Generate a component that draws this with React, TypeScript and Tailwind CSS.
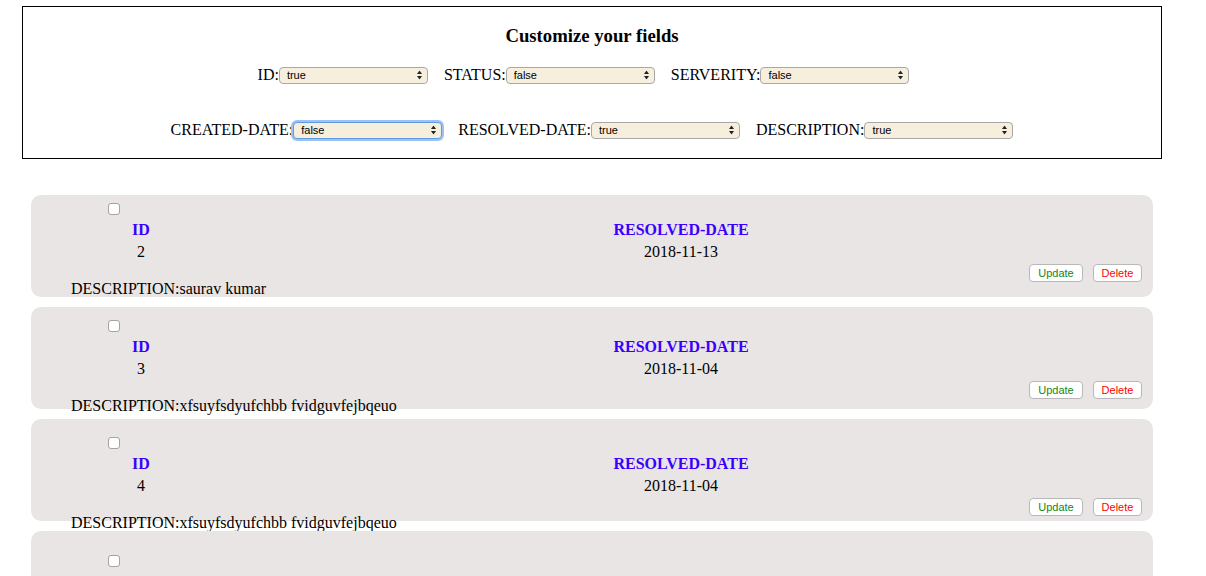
import React, { useState } from 'react';

interface Issue {
  id: number;
  resolvedDate: string;
  description: string;
  pad: string;
}

const issues: Issue[] = [
  { id: 2, resolvedDate: '2018-11-13', description: 'saurav kumar', pad: 'pt-[8px]' },
  { id: 3, resolvedDate: '2018-11-04', description: 'xfsuyfsdyufchbb fvidguvfejbqeuo', pad: 'pt-[13px]' },
  { id: 4, resolvedDate: '2018-11-04', description: 'xfsuyfsdyufchbb fvidguvfejbqeuo', pad: 'pt-[18px]' },
  { id: 5, resolvedDate: '2018-11-04', description: 'xfsuyfsdyufchbb fvidguvfejbqeuo', pad: 'pt-[24px]' },
];

type FieldKey = 'ID' | 'STATUS' | 'SERVERITY' | 'CREATED-DATE' | 'RESOLVED-DATE' | 'DESCRIPTION';

const rowOne: FieldKey[] = ['ID', 'STATUS', 'SERVERITY'];
const rowTwo: FieldKey[] = ['CREATED-DATE', 'RESOLVED-DATE', 'DESCRIPTION'];

function FieldSelect({
  label,
  value,
  focused,
  onChange,
}: {
  label: string;
  value: string;
  focused?: boolean;
  onChange: (v: string) => void;
}) {
  return (
    <div className="flex items-center h-[18px]">
      <span className="text-[16px] leading-[18px] text-black">{label}:</span>
      <div className="relative flex">
        <select
          value={value}
          onChange={(e) => onChange(e.target.value)}
          className={`block appearance-none w-[149px] h-[17px] rounded-[4px] bg-[#f7efde] pl-[7px] text-[11px] leading-[15px] text-black outline-none ${
            focused
              ? 'border border-[#5d9be3] shadow-[0_0_0_2px_#9cc3f3]'
              : 'border border-[#a8a8a8]'
          }`}
          style={{ fontFamily: '"Liberation Sans", Arial, sans-serif' }}
        >
          <option value="true">true</option>
          <option value="false">false</option>
        </select>
        <svg
          className="absolute right-[6px] top-1/2 -translate-y-1/2 pointer-events-none"
          width="5"
          height="9"
          viewBox="0 0 5 9"
        >
          <path d="M2.5 0 L5 3.5 L0 3.5 Z" fill="#222" />
          <path d="M2.5 9 L5 5.5 L0 5.5 Z" fill="#222" />
        </svg>
      </div>
    </div>
  );
}

function IssueCard({ issue }: { issue: Issue }) {
  return (
    <div className={`h-[102px] rounded-[10px] bg-[#e9e5e4] pl-[40px] pr-[11px] ${issue.pad}`}>
      <div className="ml-[37px] w-[12px] h-[12px] rounded-[3px] border border-[#a3a3a3] bg-white" />
      <div className="flex mt-[4px]">
        <div className="w-[140px] shrink-0 text-center">
          <div className="text-[16px] leading-[22px] font-bold text-[#3a00ff]">ID</div>
          <div className="text-[16px] leading-[22px] text-black">{issue.id}</div>
        </div>
        <div className="w-[940px] shrink-0 text-center">
          <div className="text-[16px] leading-[22px] font-bold text-[#3a00ff]">RESOLVED-DATE</div>
          <div className="text-[16px] leading-[22px] text-black">{issue.resolvedDate}</div>
        </div>
      </div>
      <div
        className="flex justify-end gap-[10px] h-[18px] mt-[1px]"
        style={{ fontFamily: '"Liberation Sans", Arial, sans-serif' }}
      >
        <button className="w-[54px] h-[18px] rounded-[4px] border border-[#b8b8b8] bg-white text-[11px] leading-[16px] text-[#12871a]">
          Update
        </button>
        <button className="w-[49px] h-[18px] rounded-[4px] border border-[#b8b8b8] bg-white text-[11px] leading-[16px] text-[#ff0000]">
          Delete
        </button>
      </div>
      <div className="-mt-[5px] text-[16px] text-black whitespace-nowrap">
        DESCRIPTION:{issue.description}
      </div>
    </div>
  );
}

export default function App() {
  const [fields, setFields] = useState<Record<FieldKey, string>>({
    ID: 'true',
    STATUS: 'false',
    SERVERITY: 'false',
    'CREATED-DATE': 'false',
    'RESOLVED-DATE': 'true',
    DESCRIPTION: 'true',
  });

  const setField = (key: FieldKey, v: string) => setFields((f) => ({ ...f, [key]: v }));

  return (
    <div
      className="min-h-screen bg-white pt-[6px] pb-[40px]"
      style={{ fontFamily: '"Liberation Serif", "Times New Roman", serif' }}
    >
      <div className="ml-[22px] w-[1140px] border border-black pb-[19px]">
        <h3 className="mt-[15px] mb-[16px] text-center text-[18.72px] font-bold text-black">
          Customize your fields
        </h3>
        <div className="flex justify-center gap-[16px] pr-[17px]">
          {rowOne.map((k) => (
            <FieldSelect key={k} label={k} value={fields[k]} onChange={(v) => setField(k, v)} />
          ))}
        </div>
        <div className="flex justify-center gap-[16px] mt-[37px]">
          {rowTwo.map((k) => (
            <FieldSelect
              key={k}
              label={k}
              value={fields[k]}
              focused={k === 'CREATED-DATE'}
              onChange={(v) => setField(k, v)}
            />
          ))}
        </div>
      </div>

      <div className="ml-[31px] w-[1122px] mt-[36px] flex flex-col gap-[10px]">
        {issues.map((issue) => (
          <IssueCard key={issue.id} issue={issue} />
        ))}
      </div>
    </div>
  );
}
